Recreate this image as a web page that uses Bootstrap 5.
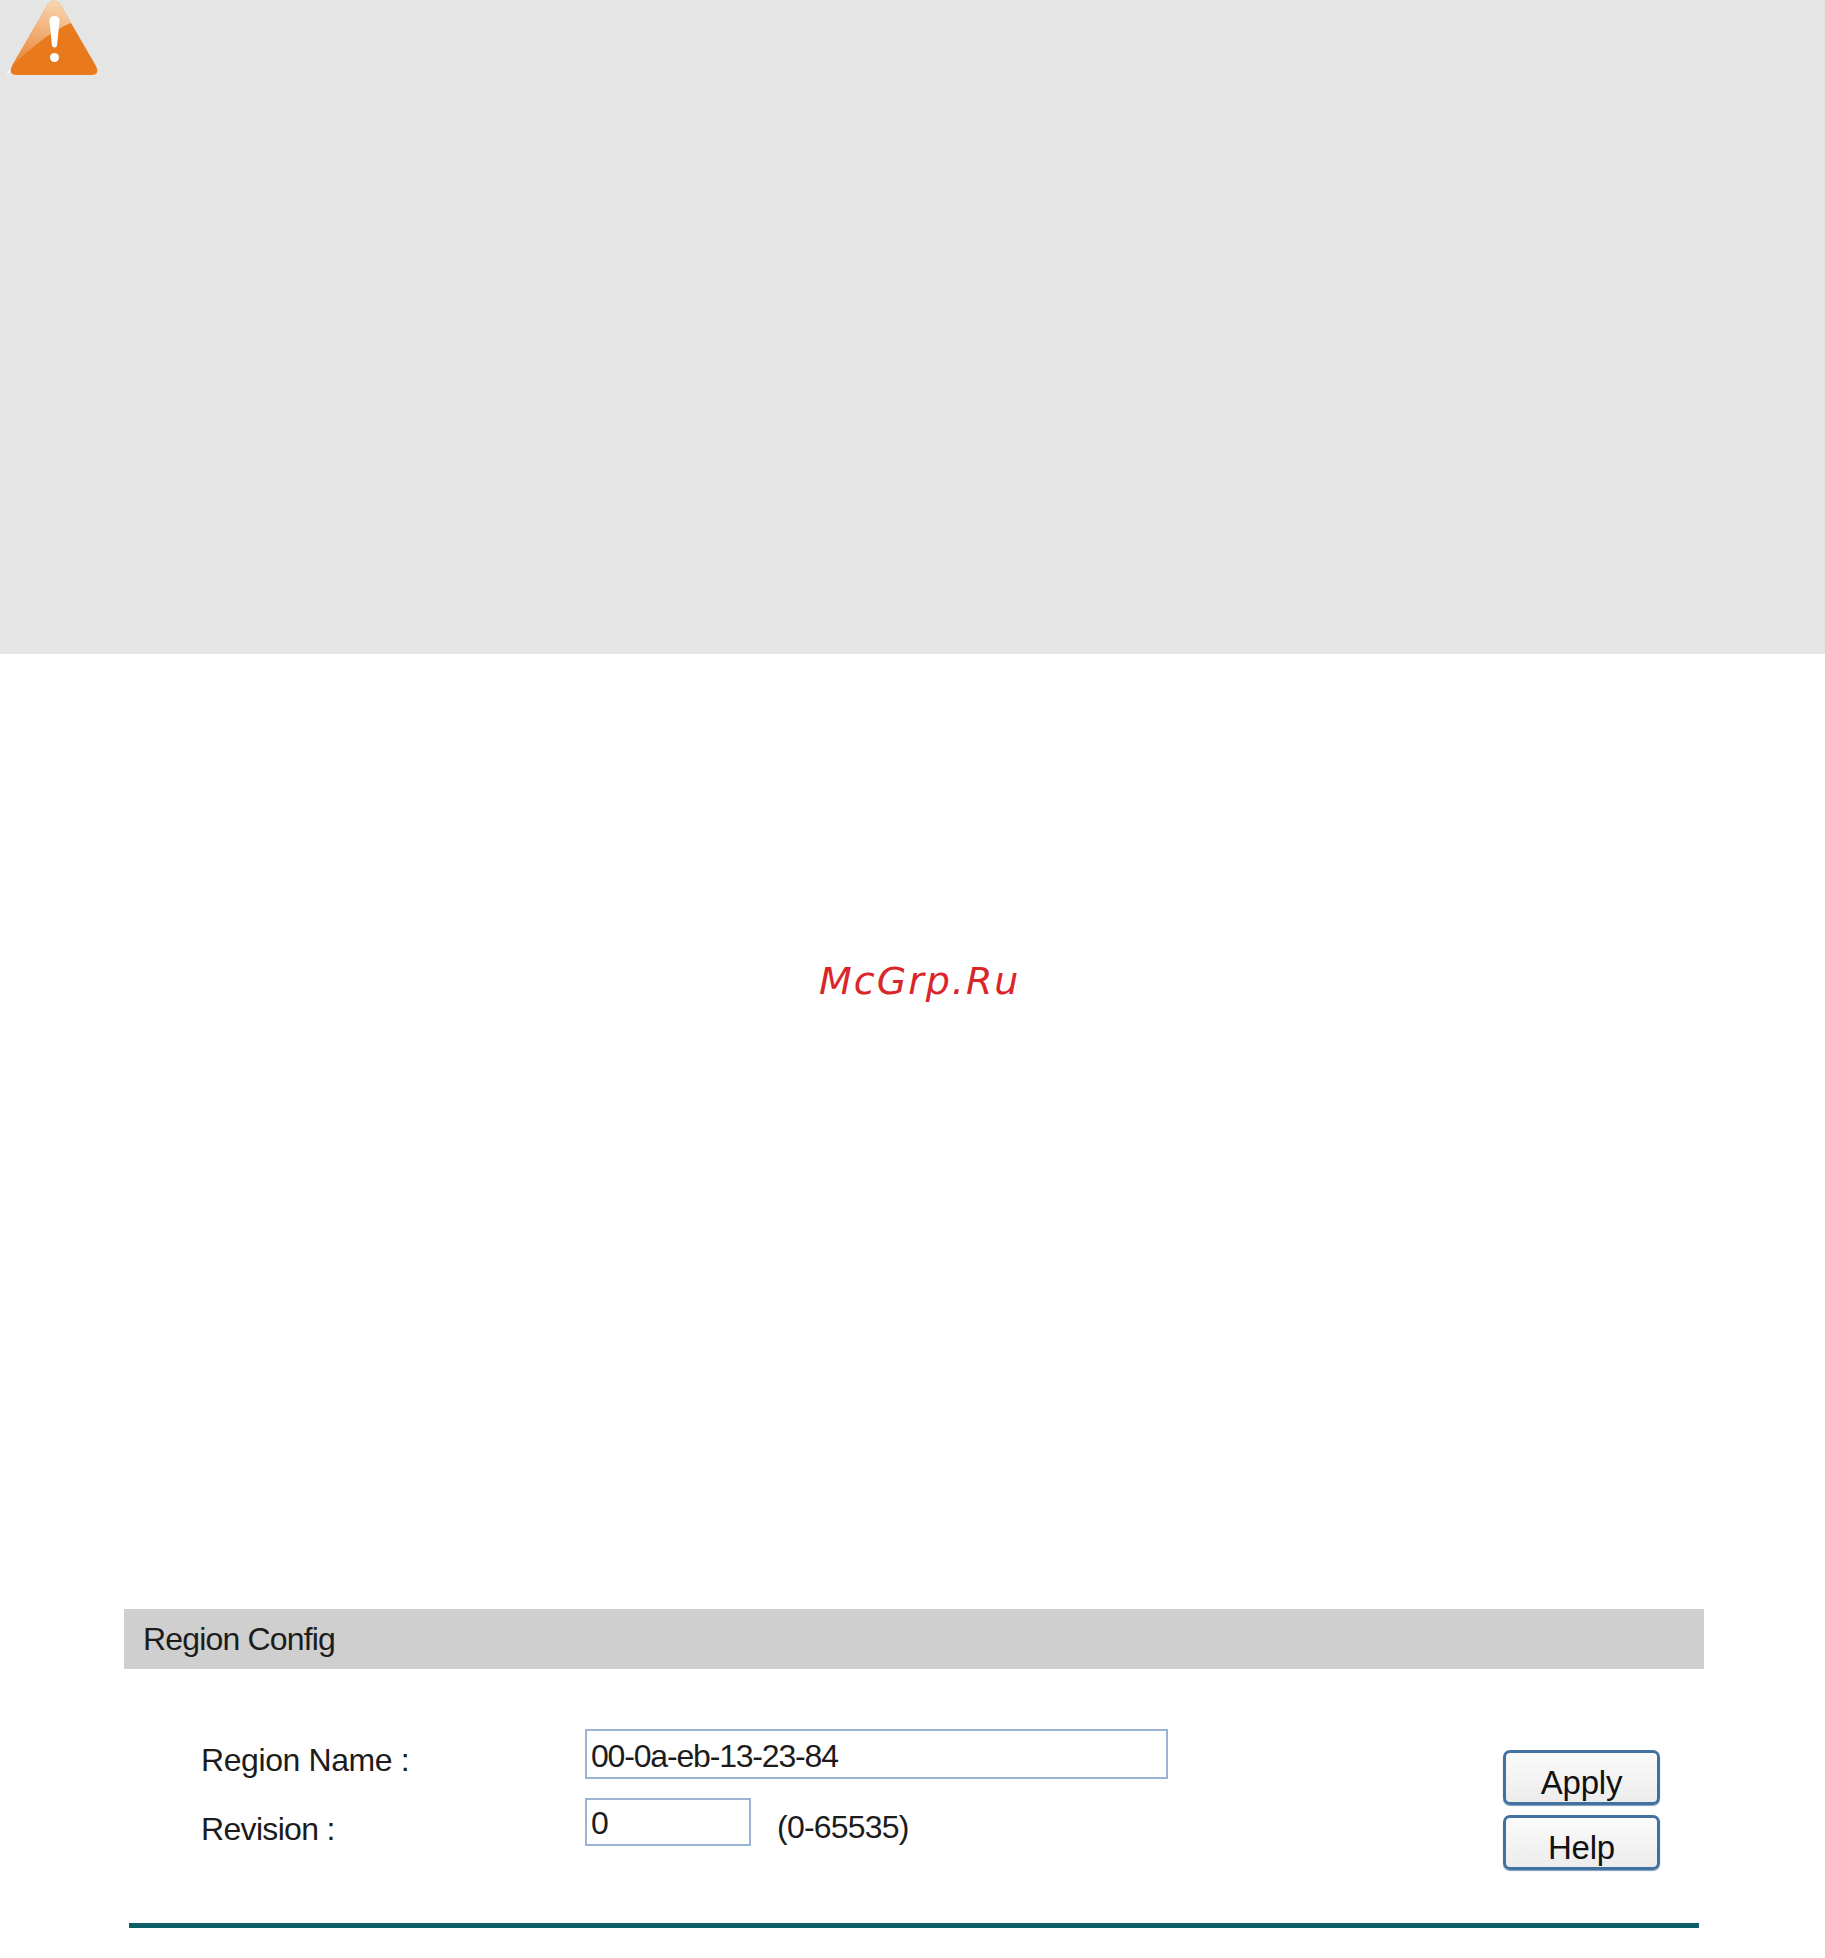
<!DOCTYPE html>
<html lang="en">
<head>
<meta charset="utf-8">
<title>Region Config</title>
<link href="https://cdn.jsdelivr.net/npm/bootstrap@5.3.0/dist/css/bootstrap.min.css" rel="stylesheet">
<style>
body{margin:0;background:#fff;font-family:"Liberation Sans",Arial,sans-serif;color:#1c1c1c}
.warn-panel{height:654px;background:#e5e5e5}
.warn-icon{display:block;width:110px;height:78px}
.gap-area{height:955px;padding-top:305px;padding-left:819px}
.mark-text{font-family:"DejaVu Sans",sans-serif;font-style:italic;font-size:38px;letter-spacing:2px;line-height:44px;color:#d9262a}
.region-head{margin:0 121px 0 124px;height:60px;background:#cfcfcf;padding:10px 0 0 19px;font-size:32px;letter-spacing:-.83px;line-height:40px}
.region-form{margin:60px 165px 0 201px;height:141px}
.form-col{width:1200px}
.label-col{width:384px;font-size:32px;line-height:40px;padding-top:11px;letter-spacing:-.4px}
.label-short{letter-spacing:-.67px}
.field-one{width:583px;height:50px;border:2px solid #9bb4d4;border-radius:0;padding:4px 4px 0;font-size:32px;letter-spacing:-1.18px;line-height:40px;color:#1c1c1c;font-family:inherit}
.field-two{width:166px;height:48px;border:2px solid #9bb4d4;border-radius:0;padding:2px 4px 0;font-size:32px;line-height:40px;color:#1c1c1c;font-family:inherit}
.hint-text{font-size:32px;letter-spacing:-.78px;line-height:40px;margin-left:26px;padding-top:9px}
.row-one{height:69px}
.row-two{height:47px}
.act-btn{width:157px;height:55px;padding:10px 0 0;border:3px solid #41719f;border-radius:7px;background:linear-gradient(#fbfbfb,#ececec);font-size:33px;letter-spacing:-.2px;line-height:38px;color:#111;box-shadow:0 1px 1px #7f9cbb}
.btn-col{padding-top:21px;margin-left:auto;row-gap:10px}
.rule-line{margin:53px 126px 0 129px;height:5px;background:#0f5f68}
</style>
</head>
<body>
<div class="warn-panel">
  <svg class="warn-icon" viewBox="0 0 110 78" role="img" aria-label="Warning">
    <defs>
      <linearGradient id="gloss" x1="0.45" y1="0" x2="0.25" y2="1">
        <stop offset="0" stop-color="#f8d2ac"/>
        <stop offset="1" stop-color="#ea8434"/>
      </linearGradient>
    </defs>
    <path d="M48 4 Q54 -3 60 4 L96 66 Q100 75 91 75 L17 75 Q8 75 12 66 Z" fill="#e8791c"/>
    <path d="M48 4 Q54 -3 60 4 L71 23 Q48 32 14 64 L12 66 Z" fill="url(#gloss)"/>
    <path d="M49.500 21 Q49.500 16 54.500 16 Q59.500 16 59.500 21 L57 46 Q54.500 49 52 46 Z" fill="#fff"/>
    <circle cx="54.500" cy="57.500" r="4.500" fill="#fff"/>
    <path d="M6 75 L10 69 L10 72 Z" fill="#fff"/>
  </svg>
</div>
<div class="gap-area"><span class="mark-text">McGrp.Ru</span></div>
<div class="region-head">Region Config</div>
<div class="region-form d-flex">
  <div class="form-col">
    <div class="row-one d-flex align-items-start">
      <label class="label-col" for="regionName">Region Name :</label>
      <input id="regionName" class="form-control field-one" value="00-0a-eb-13-23-84">
    </div>
    <div class="row-two d-flex align-items-start">
      <label class="label-col label-short" for="revision">Revision :</label>
      <input id="revision" class="form-control field-two" value="0">
      <span class="hint-text">(0-65535)</span>
    </div>
  </div>
  <div class="btn-col d-flex flex-column">
    <button type="button" class="btn act-btn">Apply</button>
    <button type="button" class="btn act-btn">Help</button>
  </div>
</div>
<div class="rule-line"></div>
<script src="https://cdn.jsdelivr.net/npm/bootstrap@5.3.0/dist/js/bootstrap.bundle.min.js"></script>
</body>
</html>
